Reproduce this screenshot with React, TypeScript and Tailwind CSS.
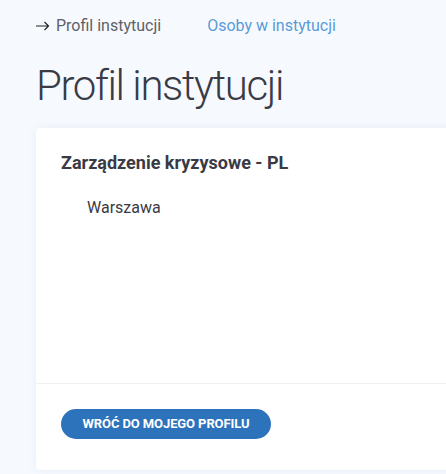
export default function App() {
  return (
    <div className="w-[446px] h-[474px] overflow-hidden bg-[#f6faff]" style={{ fontFamily: "Roboto, sans-serif" }}>
      <div className="pl-[36px] pt-[15px]">
        <div className="flex items-center h-[22px] text-[16px]">
          <svg width="14" height="10" viewBox="0 0 14 10" className="mr-[6px]" fill="none" stroke="#222" strokeWidth="1.2">
            <path d="M0 5h12.5M8.5 1l4 4-4 4" />
          </svg>
          <span className="text-[#5f6168]">Profil instytucji</span>
          <span className="ml-[46px] text-[#5a9ad8]">Osoby w instytucji</span>
        </div>
        <h1 className="mt-[24px] text-[42px] leading-[50px] font-light text-[#3a3b45] tracking-[-1.4px]">Profil instytucji</h1>
        <div className="mt-[17px] w-[480px] h-[342px] bg-white rounded-[4px] shadow-[0_0_8px_rgba(60,90,130,0.08)] flex flex-col">
          <div className="flex-1 px-[25px] pt-[22px]">
            <div className="text-[18px] font-bold text-[#3a3a44] leading-[26px]">Zarządzenie kryzysowe - PL</div>
            <div className="mt-[22px] pl-[26px] text-[16px] text-[#3a3a44] leading-[20px]">Warszawa</div>
          </div>
          <div className="border-t border-[#eef0f3] h-[87px] px-[25px] pt-[25px]">
            <button className="h-[30px] w-[210px] rounded-full bg-[#2d73bc] text-white text-[13px] font-bold tracking-[-0.1px]">WRÓĆ DO MOJEGO PROFILU</button>
          </div>
        </div>
      </div>
    </div>
  );
}
